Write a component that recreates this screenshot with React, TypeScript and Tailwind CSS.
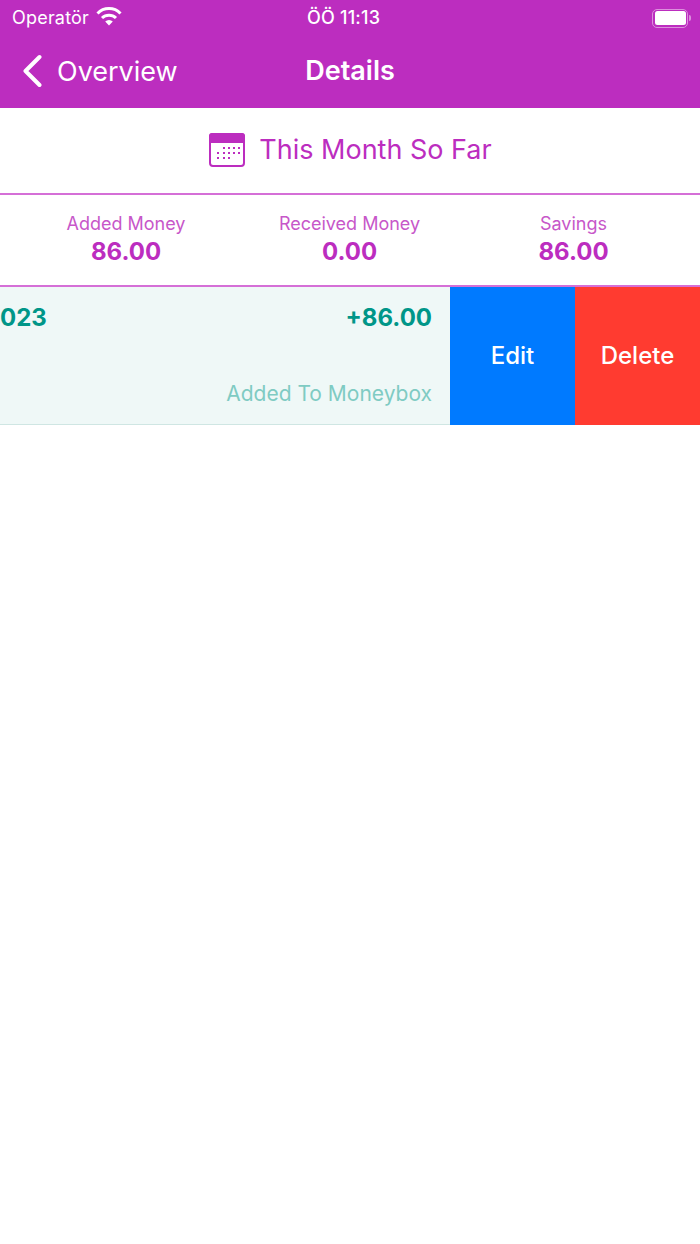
export default function App() {
  return (
    <div className="flex h-[1244px] w-[700px] flex-col overflow-hidden bg-white font-['Inter','Liberation_Sans',sans-serif]">
      <header className="h-[108px] bg-[#bc2dbf] text-white">
        <div className="relative flex h-[36px] items-center justify-between pl-[12px] pr-[9px]">
          <div className="flex items-center gap-[7px]">
            <span className="text-[18px] leading-[22px] tracking-[0.2px]">Operatör</span>
            <svg width="26" height="19" viewBox="0 0 26 19" className="mb-[3px]">
              <path d="M1.5 6.5 A16 16 0 0 1 24.5 6.5" fill="none" stroke="white" strokeWidth="3" />
              <path d="M6 11 A10 10 0 0 1 20 11" fill="none" stroke="white" strokeWidth="3" />
              <path d="M13 18.5 L9.2 14.5 A5.5 5.5 0 0 1 16.8 14.5 Z" fill="white" />
            </svg>
          </div>
          <span className="absolute left-[307px] top-[7px] text-[18px] font-medium leading-[22px] tracking-[0.2px]">ÖÖ 11:13</span>
          <div className="flex items-center gap-[1px]">
            <div className="h-[19px] w-[36px] rounded-[5px] border-[1.5px] border-[#dc8fdd] p-[1.5px]">
              <div className="h-full w-full rounded-[2.5px] bg-white" />
            </div>
            <div className="h-[6px] w-[2px] rounded-r-[2px] bg-[#dc8fdd]" />
          </div>
        </div>
        <div className="relative flex h-[72px] items-center pl-[22px]">
          <svg width="20" height="34" viewBox="0 0 20 34" className="mb-[2px]">
            <path d="M17.5 3 L3.5 17 L17.5 31" fill="none" stroke="white" strokeWidth="4" strokeLinecap="round" strokeLinejoin="round" />
          </svg>
          <span className="ml-[15px] text-[27px] leading-[34px]">Overview</span>
          <span className="absolute left-0 right-0 top-[18px] text-center text-[27px] font-semibold leading-[34px]">Details</span>
        </div>
      </header>
      <div className="flex h-[85px] items-center justify-center gap-[14px] pb-[1px] pl-[1px] text-[#bc2dbf]">
        <svg width="36" height="34" viewBox="0 0 36 34">
          <path d="M3 0 H33 A3 3 0 0 1 36 3 V10 H0 V3 A3 3 0 0 1 3 0 Z" fill="#bc2dbf" />
          <rect x="1" y="1" width="34" height="32" rx="3" fill="none" stroke="#bc2dbf" strokeWidth="2" />
          <g fill="#bc2dbf">
            <rect x="14" y="14" width="2" height="2" /><rect x="19" y="14" width="2" height="2" /><rect x="24" y="14" width="2" height="2" /><rect x="29" y="14" width="2" height="2" />
            <rect x="8" y="19" width="2" height="2" /><rect x="14" y="19" width="2" height="2" /><rect x="19" y="19" width="2" height="2" /><rect x="24" y="19" width="2" height="2" /><rect x="29" y="19" width="2" height="2" />
            <rect x="8" y="24" width="2" height="2" /><rect x="14" y="24" width="2" height="2" /><rect x="19" y="24" width="2" height="2" />
          </g>
        </svg>
        <span className="text-[27px] leading-[34px]">This Month So Far</span>
      </div>
      <div className="grid h-[94px] grid-cols-[252px_195px_253px] border-y-2 border-[#d56fd7] pt-[17px] text-center">
        {[
          ["Added Money", "86.00"],
          ["Received Money", "0.00"],
          ["Savings", "86.00"],
        ].map(([label, value]) => (
          <div key={label} className="flex flex-col items-center">
            <span className="text-[18px] leading-[24px] text-[#c757c9]">{label}</span>
            <span className="text-[24px] font-bold leading-[32px] text-[#bc2dbf]">{value}</span>
          </div>
        ))}
      </div>
      <div className="flex h-[138px]">
        <div className="flex w-[450px] flex-col justify-between border-b border-[#cfe6e3] bg-[#eff8f7] pb-[16px] pr-[18px] pt-[15px]">
          <div className="flex justify-between text-[24px] font-bold leading-[32px] text-[#009688]">
            <span>023</span>
            <span>+86.00</span>
          </div>
          <span className="text-right text-[21px] leading-[28px] text-[#7fcbc3]">Added To Moneybox</span>
        </div>
        <div className="flex w-[125px] items-center justify-center bg-[#007aff] text-[24px] font-medium text-white">Edit</div>
        <div className="flex w-[125px] items-center justify-center bg-[#ff3b30] text-[24px] font-medium text-white">Delete</div>
      </div>
    </div>
  );
}
